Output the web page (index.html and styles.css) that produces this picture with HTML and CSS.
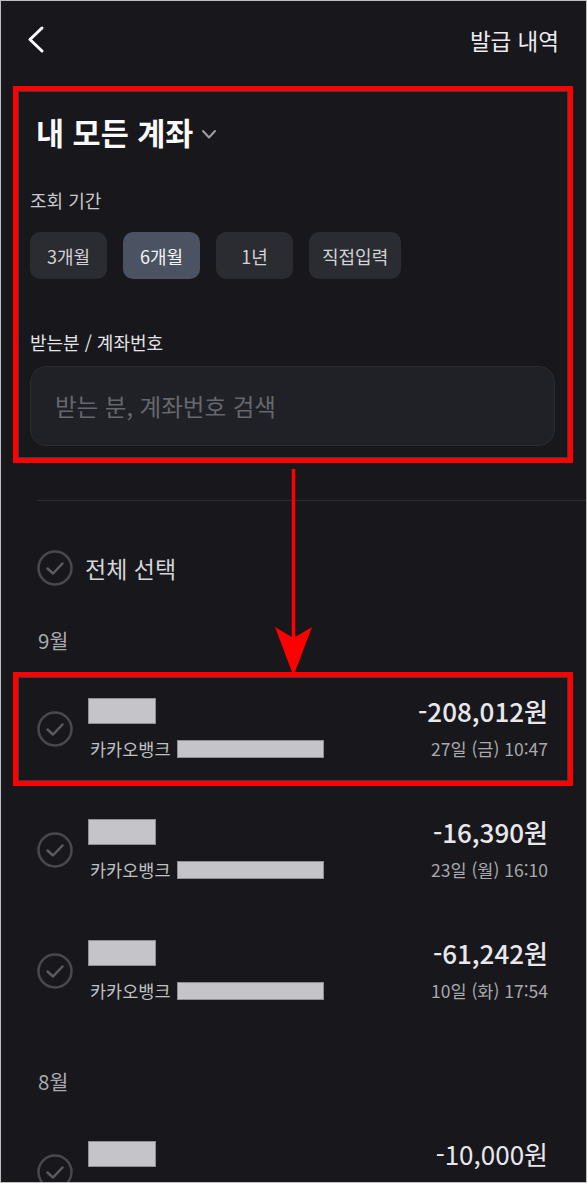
FILE: index.html
```html
<!DOCTYPE html>
<html lang="ko">
<head>
<meta charset="utf-8">
<title>발급 내역</title>
<link rel="stylesheet" href="styles.css">
</head>
<body>
<div class="screen">
  <header class="topbar">
    <span class="back" aria-label="뒤로">
      <svg width="20" height="30" viewBox="0 0 20 30"><polyline points="17,3 5,14.5 17,26" fill="none" stroke="#ffffff" stroke-width="3" stroke-linecap="round" stroke-linejoin="round"/></svg>
    </span>
    <h1 class="page-title">발급 내역</h1>
  </header>

  <section class="filter hl">
    <div class="acct">
      <span>내 모든 계좌</span>
      <svg class="acct-caret" width="16" height="12" viewBox="0 0 16 12"><polyline points="2,3 8,9.5 14,3" fill="none" stroke="#9d9da3" stroke-width="2" stroke-linecap="round" stroke-linejoin="round"/></svg>
    </div>
    <div class="label">조회 기간</div>
    <div class="chips">
      <span class="chip">3개월</span>
      <span class="chip chip-on">6개월</span>
      <span class="chip">1년</span>
      <span class="chip">직접입력</span>
    </div>
    <div class="label label-search">받는분 / 계좌번호</div>
    <div class="search">받는 분, 계좌번호 검색</div>
  </section>

  <div class="divider"></div>

  <div class="select-all">
    <svg class="check" width="36" height="36" viewBox="0 0 36 36"><circle cx="18" cy="18" r="16.5" fill="none" stroke="#48484e" stroke-width="2.5"/><polyline points="10.5,18.5 16,23.5 25.5,13.5" fill="none" stroke="#5b5b61" stroke-width="2.5" stroke-linecap="round" stroke-linejoin="round"/></svg>
    <span>전체 선택</span>
  </div>

  <div class="month">9월</div>
  <div class="list">
    <div class="tx hl">
      <svg class="check" width="36" height="36" viewBox="0 0 36 36"><circle cx="18" cy="18" r="16.5" fill="none" stroke="#48484e" stroke-width="2.5"/><polyline points="10.5,18.5 16,23.5 25.5,13.5" fill="none" stroke="#5b5b61" stroke-width="2.5" stroke-linecap="round" stroke-linejoin="round"/></svg>
      <div class="tx-main">
        <div class="tx-row1"><span class="mask-name"></span></div>
        <div class="tx-row2"><span class="bank">카카오뱅크</span><span class="mask-acct"></span></div>
      </div>
      <div class="tx-side">
        <div class="amount">-208,012원</div>
        <div class="date">27일 (금) 10:47</div>
      </div>
    </div>
    <div class="tx">
      <svg class="check" width="36" height="36" viewBox="0 0 36 36"><circle cx="18" cy="18" r="16.5" fill="none" stroke="#48484e" stroke-width="2.5"/><polyline points="10.5,18.5 16,23.5 25.5,13.5" fill="none" stroke="#5b5b61" stroke-width="2.5" stroke-linecap="round" stroke-linejoin="round"/></svg>
      <div class="tx-main">
        <div class="tx-row1"><span class="mask-name"></span></div>
        <div class="tx-row2"><span class="bank">카카오뱅크</span><span class="mask-acct"></span></div>
      </div>
      <div class="tx-side">
        <div class="amount">-16,390원</div>
        <div class="date">23일 (월) 16:10</div>
      </div>
    </div>
    <div class="tx">
      <svg class="check" width="36" height="36" viewBox="0 0 36 36"><circle cx="18" cy="18" r="16.5" fill="none" stroke="#48484e" stroke-width="2.5"/><polyline points="10.5,18.5 16,23.5 25.5,13.5" fill="none" stroke="#5b5b61" stroke-width="2.5" stroke-linecap="round" stroke-linejoin="round"/></svg>
      <div class="tx-main">
        <div class="tx-row1"><span class="mask-name"></span></div>
        <div class="tx-row2"><span class="bank">카카오뱅크</span><span class="mask-acct"></span></div>
      </div>
      <div class="tx-side">
        <div class="amount">-61,242원</div>
        <div class="date">10일 (화) 17:54</div>
      </div>
    </div>
  </div>

  <div class="month month-aug">8월</div>
  <div class="list list-aug">
    <div class="tx">
      <svg class="check" width="36" height="36" viewBox="0 0 36 36"><circle cx="18" cy="18" r="16.5" fill="none" stroke="#48484e" stroke-width="2.5"/><polyline points="10.5,18.5 16,23.5 25.5,13.5" fill="none" stroke="#5b5b61" stroke-width="2.5" stroke-linecap="round" stroke-linejoin="round"/></svg>
      <div class="tx-main">
        <div class="tx-row1"><span class="mask-name"></span></div>
        <div class="tx-row2"><span class="bank-gap"></span><span class="mask-acct"></span></div>
      </div>
      <div class="tx-side">
        <div class="amount amount-light">-10,000원</div>
        <div class="date-gap"></div>
      </div>
    </div>
  </div>

  <svg class="arrow" width="40" height="212" viewBox="0 0 40 212">
    <line x1="19.5" y1="1" x2="19.5" y2="172" stroke="#ff0000" stroke-width="3.5"/>
    <polygon points="1,159 19.5,208 38,159 19.5,170" fill="#ff0000"/>
  </svg>
</div>
</body>
</html>
```

FILE: styles.css
```css
* { box-sizing: border-box; }

html, body {
  margin: 0;
  padding: 0;
  background: #18181c;
}

body {
  font-family: "Noto Sans CJK KR", "Noto Sans", sans-serif;
  color: #e8e8ec;
}

.screen {
  position: relative;
  width: 587px;
  height: 1183px;
  overflow: hidden;
  background: #18181c;
  border: 1px solid #bdbdbd;
}

/* top bar */
.topbar {
  height: 78px;
  display: flex;
  align-items: center;
  justify-content: space-between;
  padding: 0 27px 0 24px;
}

.back {
  display: flex;
  width: 20px;
  height: 30px;
}

.page-title {
  margin: 0;
  font-size: 22.5px;
  font-weight: 400;
  color: #ececf0;
  line-height: 30px;
}

/* red highlight boxes */
.hl {
  border: 5px solid #ff0000;
  box-shadow: inset 0 0 0 1px #3c3c41;
}

/* filter */
.filter {
  margin: 7px 13px 0 12px;
  padding: 23px 13px 12px 12px;
}

.acct {
  display: flex;
  align-items: center;
  gap: 8px;
  margin-left: 6px;
  font-size: 30.5px;
  font-weight: 700;
  line-height: 36px;
  color: #fafafa;
}

.acct-caret {
  margin-top: 3px;
}

.label {
  margin-top: 38px;
  font-size: 18px;
  line-height: 24px;
  color: #c8c8cc;
}

.label-search {
  margin-top: 51px;
  color: #e4e4e8;
}

.chips {
  display: flex;
  gap: 16px;
  margin-top: 20px;
}

.chip {
  min-width: 77px;
  height: 47px;
  padding: 0 13px;
  display: flex;
  align-items: center;
  justify-content: center;
  border-radius: 10px;
  background: #2b2c32;
  color: #d2d2d6;
  font-size: 18px;
}

.chip-on {
  background: #4b5362;
  color: #f2f2f4;
}

.search {
  margin-top: 12px;
  height: 80px;
  display: flex;
  align-items: center;
  padding-left: 24px;
  border-radius: 16px;
  background: #202127;
  border: 1px solid #2b2c31;
  font-size: 23.5px;
  color: #66676d;
}

/* list */
.divider {
  margin: 37px 0 0 36px;
  height: 1px;
  background: #2d2d32;
}

.select-all {
  margin-top: 49px;
  padding-left: 36px;
  height: 36px;
  display: flex;
  align-items: center;
  gap: 12px;
  font-size: 23px;
  color: #d5d5d9;
}

.check {
  flex: none;
  display: block;
}

.month {
  margin-top: 40px;
  padding-left: 37px;
  font-size: 20.5px;
  line-height: 28px;
  color: #a9a9ae;
}

.month-aug {
  margin-top: 39px;
}

.list {
  margin-top: 18px;
  display: flex;
  flex-direction: column;
  gap: 7px;
}

.list-aug {
  margin-top: 20px;
}

.tx {
  margin: 0 13px 0 12px;
  height: 114px;
  border: 5px solid transparent;
  padding: 0 20px 0 19px;
  display: flex;
  align-items: center;
}

.tx.hl {
  border-color: #ff0000;
}

.tx-main {
  flex: 1;
  margin-left: 15px;
  display: flex;
  flex-direction: column;
  gap: 12px;
}

.tx-row1 {
  height: 28px;
  display: flex;
  align-items: flex-start;
  padding-top: 1px;
}

.mask-name {
  width: 68px;
  height: 26px;
  background: #c5c4c9;
  border: 1px solid #8e8e93;
}

.tx-row2 {
  height: 24px;
  display: flex;
  align-items: center;
  gap: 6px;
}

.bank {
  font-size: 17.5px;
  line-height: 24px;
  color: #c0c0c5;
  margin-left: 2px;
}

.bank-gap {
  width: 83px;
  height: 24px;
}

.mask-acct {
  width: 147px;
  height: 18px;
  background: #c5c4c9;
  border: 1px solid #8e8e93;
}

.tx-side {
  display: flex;
  flex-direction: column;
  align-items: flex-end;
  gap: 12px;
}

.amount {
  font-size: 26px;
  font-weight: 500;
  line-height: 28px;
  color: #e8e8ec;
}

.amount-light {
  font-weight: 400;
}

.date {
  font-size: 17.5px;
  line-height: 24px;
  color: #a8a8ad;
}

.date-gap {
  height: 24px;
}

.arrow {
  position: absolute;
  left: 273px;
  top: 467px;
}
```
